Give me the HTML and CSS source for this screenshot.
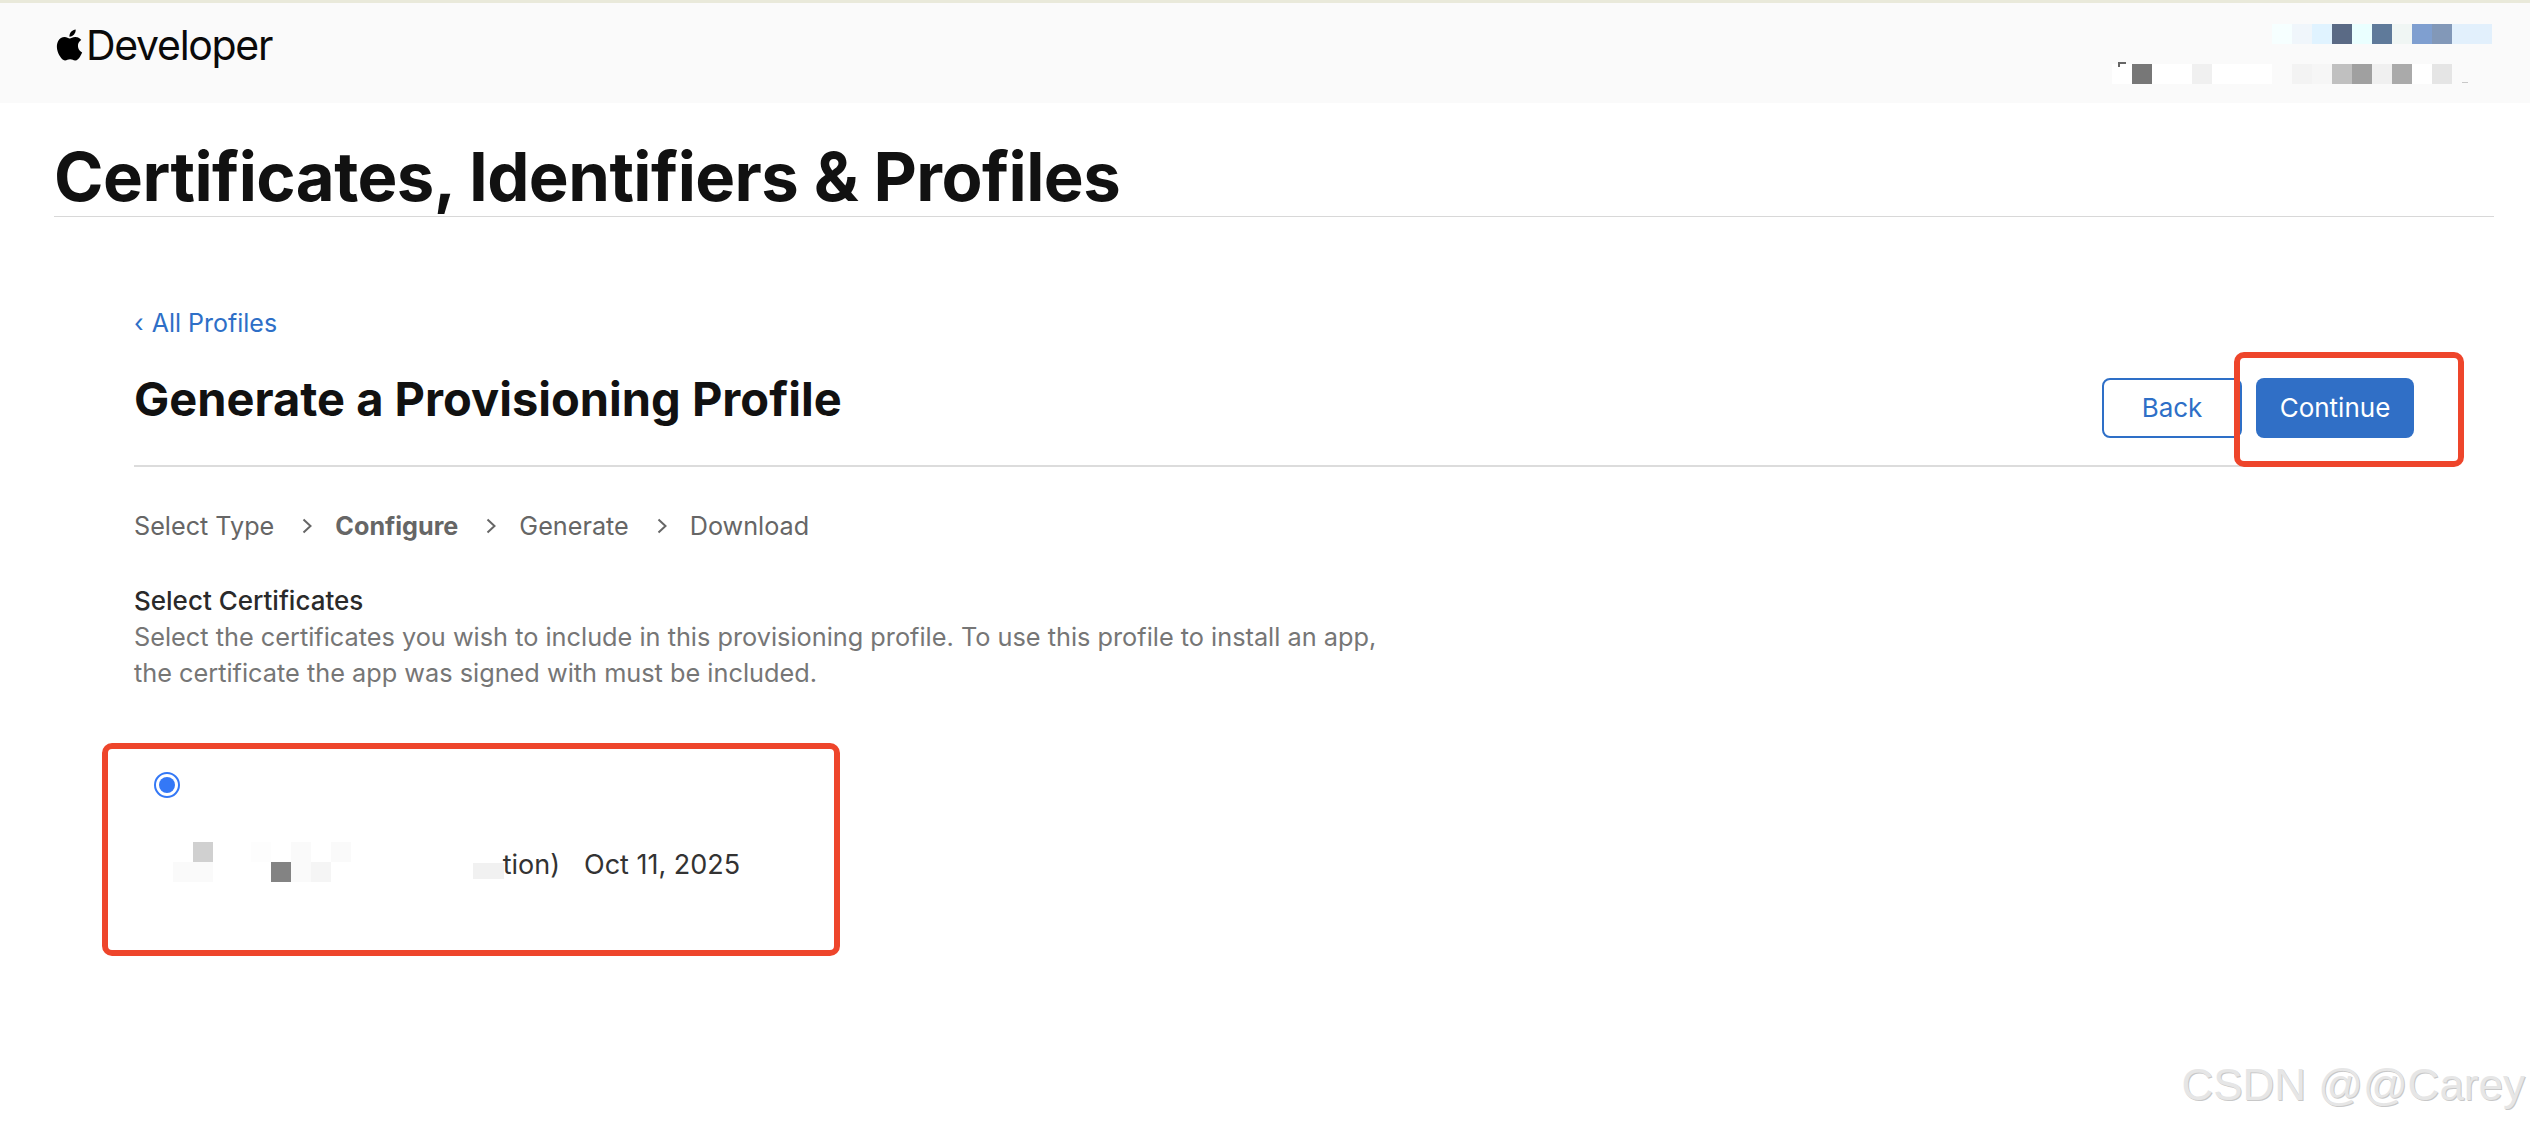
FILE: index.html
```html
<!DOCTYPE html>
<html lang="en">
<head>
<meta charset="utf-8">
<title>Certificates, Identifiers &amp; Profiles</title>
<link rel="stylesheet" href="styles.css">
</head>
<body>
<header class="topbar">
  <div class="brand">
    <svg class="apple" viewBox="0 0 24 24" aria-hidden="true"><path d="M12.152 6.896c-.948 0-2.415-1.078-3.96-1.04-2.04.027-3.91 1.183-4.961 3.014-2.117 3.675-.546 9.103 1.519 12.09 1.013 1.454 2.208 3.09 3.792 3.039 1.52-.065 2.09-.987 3.935-.987 1.831 0 2.35.987 3.96.948 1.637-.026 2.676-1.48 3.676-2.948 1.156-1.688 1.636-3.325 1.662-3.415-.039-.013-3.182-1.221-3.22-4.857-.026-3.04 2.48-4.494 2.597-4.559-1.429-2.09-3.623-2.324-4.39-2.376-2-.156-3.675 1.09-4.61 1.09zM15.53 3.83c.843-1.012 1.4-2.427 1.245-3.83-1.207.052-2.662.805-3.532 1.818-.78.896-1.454 2.338-1.273 3.714 1.338.104 2.715-.688 3.559-1.701"/></svg>
    <span class="brand-name">Developer</span>
  </div>
  <svg class="mosaic-account" viewBox="0 0 380 64" aria-hidden="true">
    <rect x="160" y="0" width="20" height="20" fill="#f6ffff"/>
    <rect x="180" y="0" width="20" height="20" fill="#f0f6fb"/>
    <rect x="200" y="0" width="20" height="20" fill="#e0f3ff"/>
    <rect x="220" y="0" width="20" height="20" fill="#5a6a85"/>
    <rect x="240" y="0" width="20" height="20" fill="#eaffff"/>
    <rect x="260" y="0" width="20" height="20" fill="#5f7a9a"/>
    <rect x="280" y="0" width="20" height="20" fill="#f0f6f4"/>
    <rect x="300" y="0" width="20" height="20" fill="#7f9fd0"/>
    <rect x="320" y="0" width="20" height="20" fill="#8298b8"/>
    <rect x="340" y="0" width="40" height="20" fill="#e2f0fc"/>
    <rect x="0" y="40" width="160" height="20" fill="#fff"/>
    <rect x="20" y="40" width="20" height="20" fill="#777"/>
    <rect x="80" y="40" width="20" height="20" fill="#f0f0f0"/>
    <rect x="6" y="38" width="8" height="2" fill="#666"/>
    <rect x="6" y="38" width="2" height="5" fill="#666"/>
    <rect x="180" y="40" width="20" height="20" fill="#f3f3f3"/>
    <rect x="200" y="40" width="20" height="20" fill="#f6f6f6"/>
    <rect x="220" y="40" width="20" height="20" fill="#c0c0c0"/>
    <rect x="240" y="40" width="20" height="20" fill="#a0a0a0"/>
    <rect x="260" y="40" width="20" height="20" fill="#f0f0f0"/>
    <rect x="280" y="40" width="20" height="20" fill="#aaa"/>
    <rect x="300" y="40" width="20" height="20" fill="#fff"/>
    <rect x="320" y="40" width="20" height="20" fill="#e5e5e5"/>
    <rect x="350" y="58" width="6" height="1" fill="#c8c8c8"/>
  </svg>
</header>

<main class="page">
  <h1 class="page-title">Certificates, Identifiers &amp; Profiles</h1>

  <section class="panel">
    <a class="back-link" href="#"><span class="back-chevron">‹</span> All Profiles</a>
    <div class="panel-head">
      <h2 class="panel-title">Generate a Provisioning Profile</h2>
      <div class="actions">
        <button class="btn btn-outline" type="button">Back</button>
        <button class="btn btn-primary" type="button">Continue</button>
      </div>
    </div>

    <ol class="steps">
      <li>Select Type</li>
      <li class="sep"><svg viewBox="0 0 10 16" aria-hidden="true"><path d="M1.5 1.5l7 6.5-7 6.5"/></svg></li>
      <li class="current">Configure</li>
      <li class="sep"><svg viewBox="0 0 10 16" aria-hidden="true"><path d="M1.5 1.5l7 6.5-7 6.5"/></svg></li>
      <li>Generate</li>
      <li class="sep"><svg viewBox="0 0 10 16" aria-hidden="true"><path d="M1.5 1.5l7 6.5-7 6.5"/></svg></li>
      <li>Download</li>
    </ol>

    <h3 class="section-title">Select Certificates</h3>
    <p class="section-text">Select the certificates you wish to include in this provisioning profile. To use this profile to install an app, the certificate the app was signed with must be included.</p>

    <div class="cert">
      <span class="radio"><span class="radio-dot"></span></span>
      <div class="cert-row">
        <span class="cert-name">
          <svg class="mosaic-cert" viewBox="0 0 331 40" aria-hidden="true">
            <rect x="0" y="20" width="40" height="20" fill="#fafafa"/>
            <rect x="20" y="0" width="20" height="20" fill="#d0d0d0"/>
            <rect x="98" y="20" width="20" height="20" fill="#838383"/>
            <rect x="118" y="20" width="20" height="20" fill="#fafafa"/>
            <rect x="138" y="20" width="20" height="20" fill="#f5f5f5"/>
            <rect x="78" y="0" width="20" height="20" fill="#fdfdfd"/>
            <rect x="118" y="0" width="20" height="20" fill="#fafafa"/>
            <rect x="158" y="0" width="20" height="20" fill="#fafafa"/>
            <rect x="300" y="21" width="31" height="16" fill="#f1f1f1"/>
          </svg>
          <span class="cert-tail">tion)</span>
        </span>
        <span class="cert-date">Oct 11, 2025</span>
      </div>
    </div>
  </section>
</main>

<div class="mark mark-continue"></div>
<div class="mark mark-cert"></div>
<div class="watermark">CSDN @@Carey</div>
</body>
</html>
```
FILE: styles.css
```css
* { box-sizing: border-box; }
html, body { margin: 0; padding: 0; }
body {
  position: relative;
  width: 2530px;
  height: 1126px;
  overflow: hidden;
  background: #fff;
  font-family: Inter, "Liberation Sans", sans-serif;
  color: #111;
}
.topbar {
  position: relative;
  height: 103px;
  padding: 0 0 0 54px;
  background: #fafafa;
  border-top: 3px solid #e9e9da;
}
.brand {
  display: flex;
  align-items: center;
  height: 84px;
}
.apple { width: 31px; height: 34px; fill: #000; margin-right: 1px; }
.brand-name {
  font-size: 41px;
  letter-spacing: -1.3px;
  color: #0a0a0a;
}
.mosaic-account {
  position: absolute;
  left: 2112px;
  top: 21px;
  width: 380px;
  height: 64px;
  overflow: visible;
}
.page { padding: 0 36px 0 54px; }
.page-title {
  margin: 0;
  height: 114px;
  padding-top: 38px;
  font-size: 67px;
  line-height: 72px;
  font-weight: 700;
  letter-spacing: -0.55px;
  color: #111;
  border-bottom: 1px solid #d8d8d8;
}
.panel { padding: 91px 74px 0 80px; }
.back-link {
  display: block;
  font-size: 25px;
  line-height: 30px;
  color: #2e6fc7;
  text-decoration: none;
}
.back-chevron { margin-right: 1px; }
.panel-head {
  display: flex;
  align-items: flex-start;
  justify-content: space-between;
  height: 129px;
  border-bottom: 2px solid #dcdcdc;
  padding-top: 33px;
}
.panel-title {
  margin: 0;
  font-size: 47px;
  line-height: 56px;
  font-weight: 700;
  color: #111;
}
.actions {
  display: flex;
  gap: 14px;
  margin: 7px 6px 0 0;
}
.btn {
  height: 60px;
  border-radius: 8px;
  padding: 0 0 2px;
  font-family: inherit;
  font-size: 26px;
}
.btn-outline {
  width: 140px;
  background: #fff;
  border: 2px solid #2e6fc7;
  color: #2e6fc7;
}
.btn-primary {
  width: 158px;
  background: #306fc6;
  border: 0;
  color: #fff;
}
.steps {
  display: flex;
  align-items: center;
  gap: 23px;
  list-style: none;
  margin: 44px 0 0;
  padding: 0;
  font-size: 25.2px;
  line-height: 30px;
  color: #666;
}
.steps .current { font-weight: 700; }
.sep { display: flex; margin-left: 5px; }
.sep svg { width: 10px; height: 16px; fill: none; stroke: #666; stroke-width: 2; }
.section-title {
  margin: 43px 0 1px;
  font-size: 26px;
  line-height: 34px;
  font-weight: 500;
  color: #2a2a2a;
}
.section-text {
  margin: 0;
  width: 1270px;
  font-size: 25.3px;
  line-height: 36px;
  color: #767676;
}
.cert { padding: 81px 0 0 0; }
.radio {
  display: block;
  position: relative;
  width: 26px;
  height: 26px;
  border: 2px solid #3478f6;
  border-radius: 50%;
  margin-left: 20px;
}
.radio-dot {
  position: absolute;
  left: 3px;
  top: 3px;
  width: 16px;
  height: 16px;
  border-radius: 50%;
  background: #3478f6;
}
.cert-row {
  display: flex;
  align-items: center;
  gap: 24px;
  margin: 52px 0 0 39px;
  font-size: 27px;
  line-height: 30px;
  color: #333;
}
.cert-name { display: flex; align-items: center; width: 387px; justify-content: flex-end; position: relative; }
.mosaic-cert {
  position: absolute;
  left: 0;
  top: -8px;
  width: 331px;
  height: 40px;
  overflow: visible;
}
.mark {
  position: absolute;
  border: 6px solid #ee452b;
  border-radius: 10px;
}
.mark-continue { left: 2234px; top: 352px; width: 230px; height: 115px; }
.mark-cert { left: 102px; top: 743px; width: 738px; height: 213px; }
.watermark {
  position: absolute;
  right: 5px;
  bottom: 14px;
  font-family: "Liberation Sans", sans-serif;
  font-size: 44px;
  line-height: 54px;
  color: #e6e6e6;
  text-shadow: 1px 1px 0 #c8c8c8;
}
```
